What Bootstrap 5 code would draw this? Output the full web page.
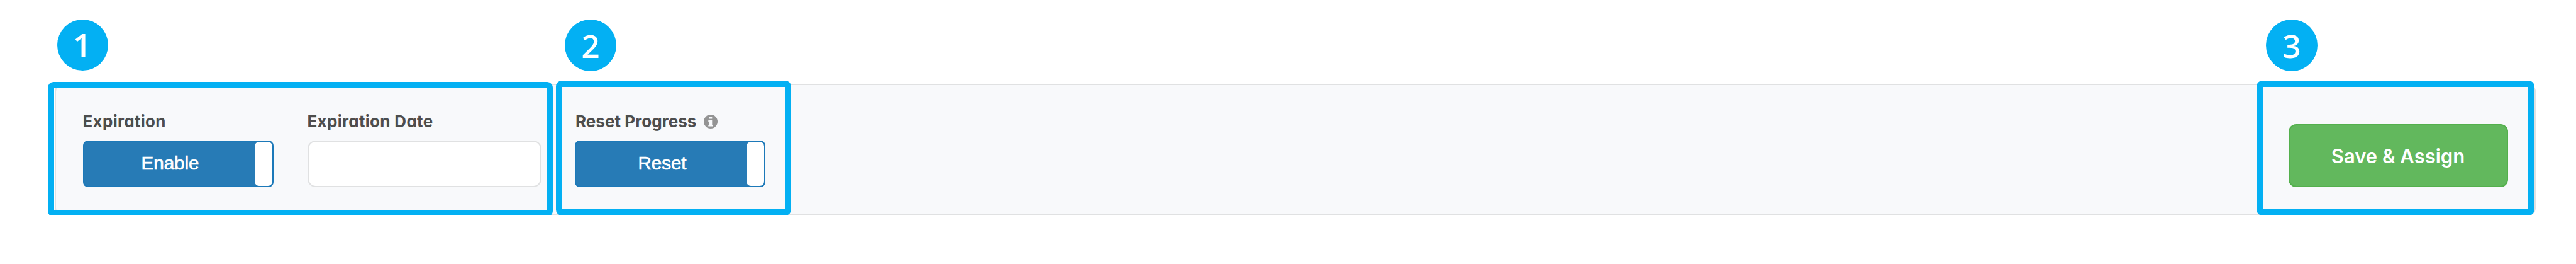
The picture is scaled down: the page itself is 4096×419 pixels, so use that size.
<!DOCTYPE html>
<html lang="en">
<head>
  <meta charset="UTF-8">
  <meta name="viewport" content="width=device-width, initial-scale=1.0">
  <title>Assignment Options</title>
  <link href="https://cdn.jsdelivr.net/npm/bootstrap@5.3.0/dist/css/bootstrap.min.css" rel="stylesheet">
  <style>
    body { padding: 133px 64px 0 87px; overflow: hidden; }

    .options-bar { height: 209px; background: #f8f9fb; border: 2px solid #e0e1e2; border-radius: 12px; }

    /* highlighted steps */
    .step { height: 214px; border: 10px solid #03b0f3; border-radius: 9px; }
    .step-expiration { width: 803px; margin: -5px 0 0 -13px; padding: 33px 0 0 45.5px; gap: 54px; }
    .step-reset { width: 374px; margin: -7px 0 0 5px; padding: 35px 0 0 20px; }
    .step-save { width: 442px; margin-top: -7px; padding: 59px 0 0 40.5px; }
    .step-number {
      top: -107px; left: 4px; width: 82px; height: 82px;
      background: #03b0f3; color: #fff;
      font: 600 51px/82px "Open Sans", sans-serif;
    }
    .step-expiration .step-number { top: -109px; left: 5px; width: 81px; height: 81px; line-height: 79px; padding-right: 2px; }
    .step-save .step-number { left: 5px; }

    .field-label {
      height: 40px; margin-bottom: 10px; color: #4d4d4d;
      font: 700 26px/40px Inter, sans-serif; font-feature-settings: "cv11";
      letter-spacing: .3px;
    }
    .step-reset .field-label { padding-left: 1px; letter-spacing: .05px; }
    .info-icon { width: 22px; height: 22px; margin-left: 12px; }

    .switch { width: 303px; height: 74px; background: #277bb6; border: 2px solid #1c79b9; border-radius: 8px; }
    .switch-text {
      padding-left: 3px; color: #fff;
      font: 29.5px/68px "Liberation Sans", Arial, sans-serif;
      -webkit-text-stroke: .7px #fff;
    }
    .switch-knob { width: 28px; background: #fff; border-radius: 7px; }

    .date-input { width: 372px; height: 74px; border: 2px solid #e0e1e2; border-radius: 13px; }

    .btn-save {
      width: 349px; height: 100px; background: #62b85d; border: 2px solid #54b04d; border-radius: 12px;
      color: #fff; font: 600 31px/1 Inter, sans-serif;
    }
  </style>
</head>
<body>
  <div class="options-bar d-flex align-items-start">
    <section class="step step-expiration d-flex position-relative">
      <span class="step-number position-absolute rounded-circle text-center">1</span>
      <div>
        <div class="field-label">Expiration</div>
        <div class="switch d-flex">
          <span class="switch-text flex-grow-1 text-center">Enable</span>
          <span class="switch-knob"></span>
        </div>
      </div>
      <div>
        <label class="field-label d-block" for="expirationDate">Expiration Date</label>
        <input type="text" class="form-control date-input" id="expirationDate">
      </div>
    </section>

    <section class="step step-reset position-relative">
      <span class="step-number position-absolute rounded-circle text-center">2</span>
      <div class="field-label d-flex align-items-center">
        <span>Reset Progress</span>
        <svg class="info-icon" viewBox="0 0 22 22">
          <circle cx="11" cy="11" r="11" fill="#949494"/>
          <path d="M8.7 3.2h4.6v3.3H8.7zM7.3 8.3h6v7.6h1.6v2.7H7.3v-2.7h1.5V11H7.3z" fill="#f8f9fb"/>
        </svg>
      </div>
      <div class="switch d-flex">
        <span class="switch-text flex-grow-1 text-center">Reset</span>
        <span class="switch-knob"></span>
      </div>
    </section>

    <section class="step step-save ms-auto position-relative">
      <span class="step-number position-absolute rounded-circle text-center">3</span>
      <button type="button" class="btn btn-save">Save &amp; Assign</button>
    </section>
  </div>

  <script src="https://cdn.jsdelivr.net/npm/bootstrap@5.3.0/dist/js/bootstrap.bundle.min.js"></script>
</body>
</html>
